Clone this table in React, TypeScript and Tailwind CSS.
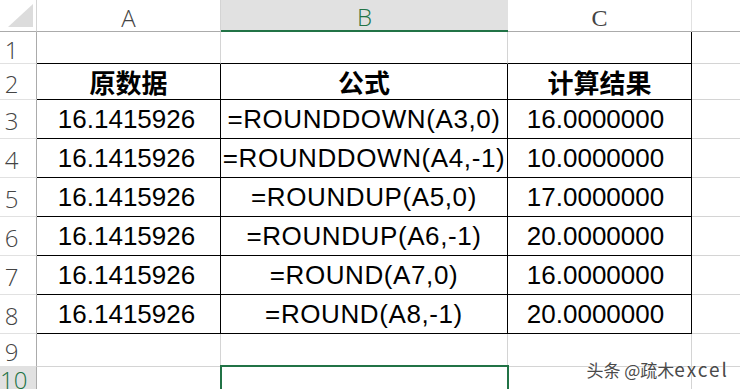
const rows = [
  { a: '16.1415926', b: '=ROUNDDOWN(A3,0)', c: '16.0000000' },
  { a: '16.1415926', b: '=ROUNDDOWN(A4,-1)', c: '10.0000000' },
  { a: '16.1415926', b: '=ROUNDUP(A5,0)', c: '17.0000000' },
  { a: '16.1415926', b: '=ROUNDUP(A6,-1)', c: '20.0000000' },
  { a: '16.1415926', b: '=ROUND(A7,0)', c: '16.0000000' },
  { a: '16.1415926', b: '=ROUND(A8,-1)', c: '20.0000000' },
];

function RowHead({ n, active = false }: { n: number; active?: boolean }) {
  return (
    <div
      className={`flex items-center border-r border-b border-r-[#ababab] border-b-[#e1e1e1] pt-1 ${
        active ? 'bg-[#e1e1e1] text-[#217346]' : 'bg-white text-[#444]'
      }`}
    >
      <span className="w-[23px] text-center font-['Open_Sans',sans-serif] text-[24px] font-light leading-none">
        {n}
      </span>
    </div>
  );
}

const dataCell = 'flex items-center justify-center border-r border-b border-black text-black';
const dataFont = "font-['Liberation_Sans',sans-serif] text-[26px] leading-none whitespace-nowrap";
const headFont = "font-['Noto_Sans_CJK_SC',sans-serif] text-[26px] font-bold leading-none";

export default function App() {
  return (
    <div className="relative h-[389px] w-[740px] overflow-hidden bg-white">
      <div className="grid grid-cols-[37px_184px_287px_184px_49px] grid-rows-[32px_32px_36px_repeat(6,39px)_33px_23px]">
        {/* column headers */}
        <div className="relative border-r border-b border-r-[#d4d4d4] border-b-[#ababab] bg-white">
          <svg className="absolute left-0 top-0" width="36" height="31" viewBox="0 0 36 31">
            <polygon points="8,27 33,27 33,4" fill="#dcdcdc" />
          </svg>
        </div>
        <div className="flex items-center justify-center border-r border-b border-r-[#d4d4d4] border-b-[#ababab] bg-white pt-1 font-['Open_Sans',sans-serif] text-[24px] font-light leading-none text-[#444]">
          A
        </div>
        <div className="flex items-center justify-center border-b-2 border-b-[#217346] bg-[#e1e1e1] pt-1 font-['Open_Sans',sans-serif] text-[24px] font-light leading-none text-[#217346]">
          B
        </div>
        <div className="flex items-center justify-center border-r border-b border-r-[#e1e1e1] border-b-[#ababab] bg-white pt-1 font-['Liberation_Serif',serif] text-[24px] leading-none text-[#444]">
          C
        </div>
        <div className="border-b border-b-[#ababab] bg-white" />

        {/* row 1 */}
        <RowHead n={1} />
        <div className="border-r border-b border-r-[#d4d4d4] border-b-black" />
        <div className="border-r border-b border-r-[#d4d4d4] border-b-black" />
        <div className="border-r border-b border-r-black border-b-black" />
        <div className="border-b border-[#d4d4d4]" />

        {/* row 2 */}
        <RowHead n={2} />
        <div className={dataCell}>
          <span className={headFont}>原数据</span>
        </div>
        <div className={dataCell}>
          <span className={headFont}>公式</span>
        </div>
        <div className={dataCell}>
          <span className={headFont}>计算结果</span>
        </div>
        <div className="border-b border-[#d4d4d4]" />

        {rows.map((r, i) => (
          <div key={i} className="contents">
            <RowHead n={i + 3} />
            <div className={`${dataCell} pr-1`}>
              <span className={dataFont}>{r.a}</span>
            </div>
            <div className={dataCell}>
              <span className={`${dataFont} tracking-[0.6px]`}>{r.b}</span>
            </div>
            <div className={`${dataCell} pr-2`}>
              <span className={dataFont}>{r.c}</span>
            </div>
            <div className="border-b border-[#d4d4d4]" />
          </div>
        ))}

        {/* row 9 */}
        <RowHead n={9} />
        <div className="border-r border-b border-[#d4d4d4]" />
        <div className="border-r border-b border-[#d4d4d4]" />
        <div className="border-r border-b border-[#d4d4d4]" />
        <div className="border-b border-[#d4d4d4]" />

        {/* row 10 */}
        <RowHead n={10} active />
        <div className="border-r border-[#d4d4d4]" />
        <div className="relative border-r border-[#d4d4d4]">
          <div className="absolute -left-px -top-0.5 h-[40px] w-[289px] border-2 border-[#217346]" />
        </div>
        <div className="border-r border-[#d4d4d4]" />
        <div />
      </div>

      <div className="absolute right-[11px] top-[359px] flex items-baseline whitespace-nowrap font-['Noto_Sans_CJK_SC',sans-serif] text-[17px] leading-none text-[#4a4a4a] [text-shadow:0_0_2px_#fff,0_0_1px_#fff]">
        <span>头条 @疏木</span>
        <span className="text-[19px] tracking-[2px]">excel</span>
      </div>
    </div>
  );
}
